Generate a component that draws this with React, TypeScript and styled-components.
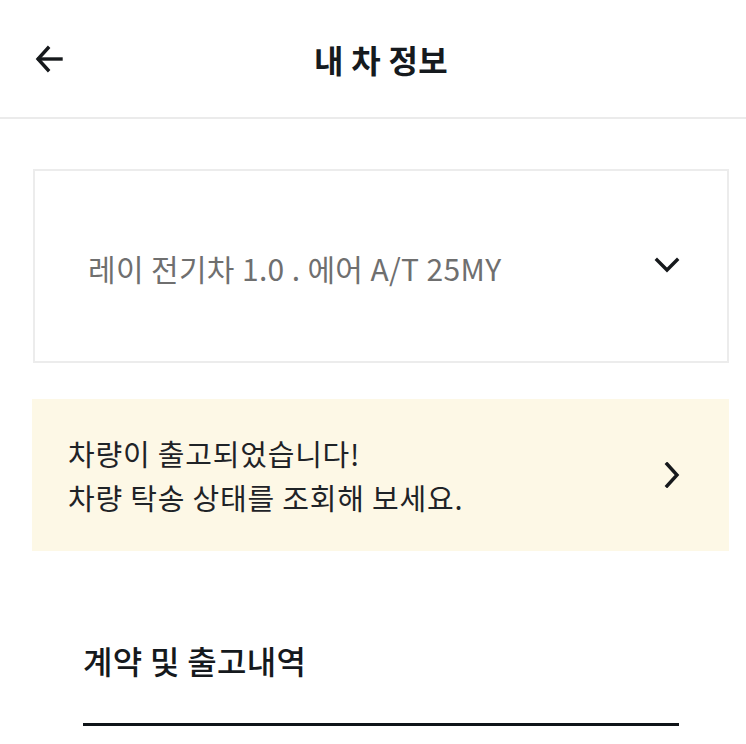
import styled, { createGlobalStyle } from "styled-components";

const GlobalStyle = createGlobalStyle`
  body {
    margin: 0;
    background: #ffffff;
    font-family: "Noto Sans CJK KR", "Noto Sans", sans-serif;
    color: #1b1f23;
  }
`;

const Page = styled.div`
  width: 746px;
  min-height: 744px;
  overflow: hidden;
`;

const Header = styled.header`
  height: 117px;
  border-bottom: 2px solid #ebebeb;
  display: grid;
  grid-template-columns: 1fr auto 1fr;
  align-items: center;
`;

const BackButton = styled.button`
  justify-self: start;
  margin-left: 34px;
  padding: 0;
  border: 0;
  background: none;
  display: flex;
  color: #16191c;
`;

const Title = styled.h1`
  margin: 0 0 0 16px;
  font-size: 32px;
  font-weight: 700;
  color: #161a1e;
  letter-spacing: 0.3px;
`;

const Content = styled.main`
  padding: 50px 17px 0 32px;
  display: flex;
  flex-direction: column;
`;

const SelectBox = styled.div`
  height: 194px;
  box-sizing: border-box;
  border: 2px solid #ececec;
  margin-left: 1px;
  display: flex;
  align-items: center;
  justify-content: space-between;
  padding: 0 47px 0 53px;
`;

const SelectText = styled.span`
  font-size: 30px;
  font-weight: 400;
  color: #6f6f6f;
  letter-spacing: 0.35px;
  margin-top: 4px;
`;

const Banner = styled.div`
  margin-top: 36px;
  height: 152px;
  background: #fdf8e6;
  display: flex;
  align-items: center;
  justify-content: space-between;
  padding: 0 49px 0 36px;
`;

const BannerText = styled.p`
  margin: 0;
  font-size: 29px;
  line-height: 44px;
  font-weight: 400;
  color: #1f2327;
  letter-spacing: 0.8px;
`;

const Section = styled.section`
  padding: 86px 67px 0 83px;
`;

const SectionTitle = styled.h2`
  margin: 0;
  font-size: 32px;
  font-weight: 500;
  color: #15191d;
  letter-spacing: 0.3px;
`;

const Divider = styled.div`
  margin-top: 40px;
  height: 3px;
  background: #0f1418;
`;

const Icon = styled.svg`
  display: block;
  fill: none;
  stroke: currentColor;
  stroke-linecap: square;
`;

export default function App() {
  return (
    <Page>
      <GlobalStyle />
      <Header>
        <BackButton aria-label="뒤로">
          <Icon width="30" height="30" viewBox="0 0 30 30" strokeWidth="3.4">
            <path d="M27 15H5" />
            <path d="M14 4L4 15l10 11" />
          </Icon>
        </BackButton>
        <Title>내 차 정보</Title>
        <span />
      </Header>
      <Content>
        <SelectBox>
          <SelectText>레이 전기차 1.0 . 에어 A/T 25MY</SelectText>
          <Icon width="26" height="16" viewBox="0 0 26 16" strokeWidth="3.4" style={{ color: "#16191c", marginTop: -2 }}>
            <path d="M3 3l10 10 10-10" />
          </Icon>
        </SelectBox>
        <Banner>
          <BannerText>
            차량이 출고되었습니다!
            <br />
            차량 탁송 상태를 조회해 보세요.
          </BannerText>
          <Icon width="16" height="26" viewBox="0 0 16 26" strokeWidth="3.4" style={{ color: "#16191c" }}>
            <path d="M3 2l10 11-10 11" />
          </Icon>
        </Banner>
      </Content>
      <Section>
        <SectionTitle>계약 및 출고내역</SectionTitle>
        <Divider />
      </Section>
    </Page>
  );
}
